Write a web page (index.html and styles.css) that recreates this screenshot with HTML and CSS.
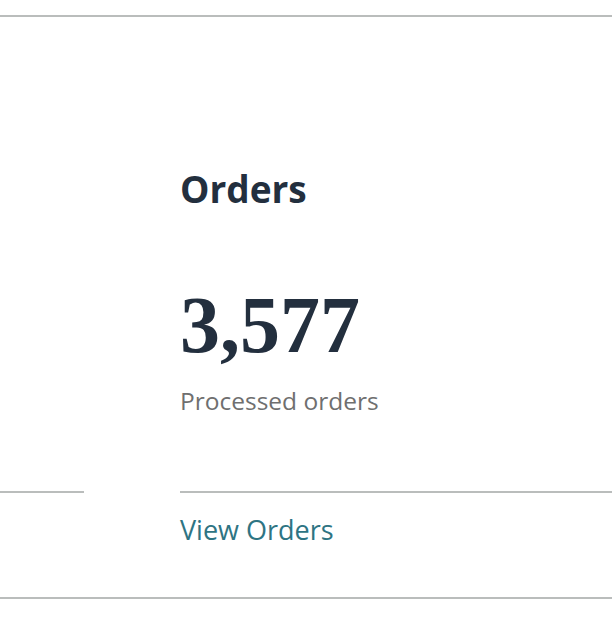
FILE: index.html
```html
<!DOCTYPE html>
<html lang="en">
<head>
  <meta charset="UTF-8">
  <meta name="viewport" content="width=device-width, initial-scale=1.0">
  <title>Orders</title>
  <link rel="stylesheet" href="styles.css">
</head>
<body>
  <div class="summary">
    <div class="cards">
      <div class="card">
        <div class="card-body"></div>
        <div class="card-footer"></div>
      </div>
      <div class="card">
        <div class="card-body">
          <h2 class="card-title">Orders</h2>
          <div class="stat">3,577</div>
          <p class="stat-label">Processed orders</p>
        </div>
        <div class="card-footer">
          <a class="card-link" href="#">View Orders</a>
        </div>
      </div>
    </div>
  </div>
</body>
</html>
```

FILE: styles.css
```css
body {
  margin: 0;
  background: #fff;
  font-family: 'Open Sans', 'Noto Sans', sans-serif;
  color: #232f3e;
}
.summary {
  margin-top: 15px;
  border-top: 2px solid #babdbc;
  border-bottom: 2px solid #babdbc;
}
.cards {
  display: grid;
  grid-template-columns: 84px 432px;
  column-gap: 96px;
}
.card {
  display: flex;
  flex-direction: column;
}
.card-body {
  flex: 1;
  padding: 150px 0 74px;
}
.card-title {
  margin: 0;
  font-size: 37px;
  line-height: 44px;
  font-weight: 700;
}
.stat {
  margin-top: 74px;
  font-family: 'Liberation Serif', 'Times New Roman', serif;
  font-size: 80px;
  line-height: 80px;
  font-weight: 700;
}
.stat-label {
  margin: 20px 0 0;
  font-size: 24.5px;
  line-height: 32px;
  color: #6f6f6f;
}
.card-footer {
  border-top: 2px solid #babdbc;
  padding: 19px 0 49px;
  min-height: 36px;
}
.card-link {
  font-size: 27px;
  line-height: 36px;
  color: #2e7483;
  text-decoration: none;
}
```
